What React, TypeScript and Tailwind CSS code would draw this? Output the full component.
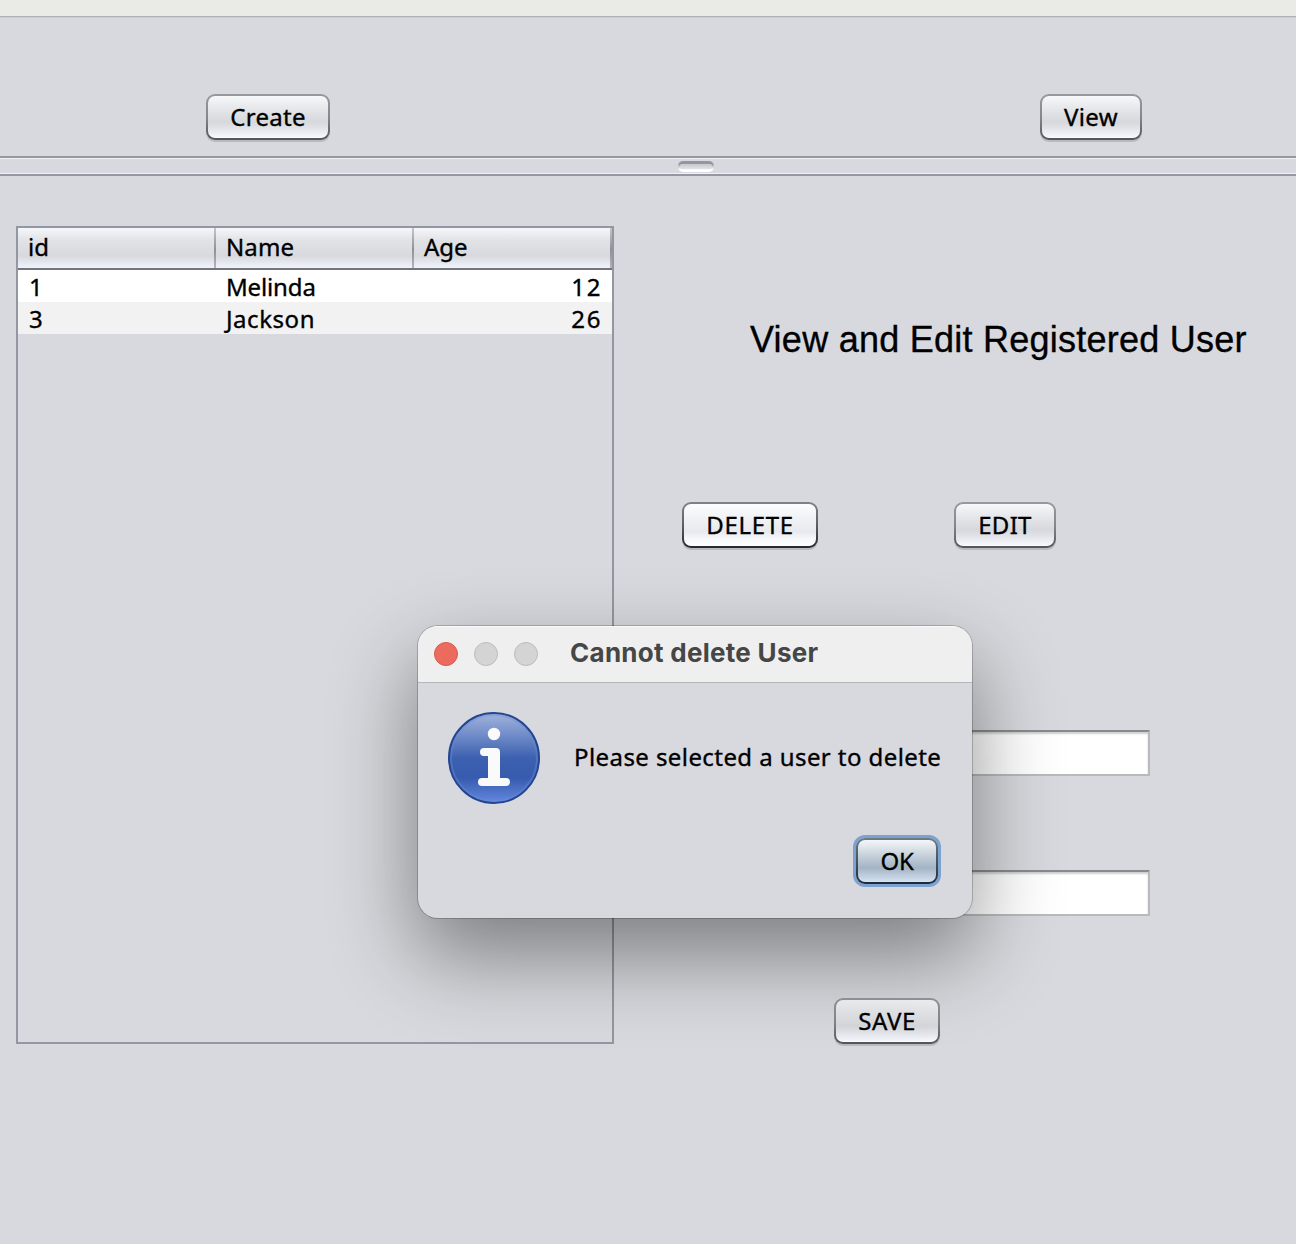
import React from "react";

const face = {
  normal: "bg-[linear-gradient(180deg,#f7f8fa_0%,#e6e7ea_30%,#d7d8dc_62%,#e4e6ec_80%,#f7faff_100%)]",
  hover: "bg-[linear-gradient(180deg,#fdfdfe_0%,#f2f3f6_30%,#e7e9ee_66%,#f6f7fa_82%,#ffffff_100%)]",
  primary: "bg-[linear-gradient(180deg,#f4f7f9_0%,#cfd8e1_30%,#a3b4c4_66%,#bdcbda_84%,#d3e4f7_100%)]",
};

const edge = {
  normal: "bg-[linear-gradient(180deg,#949a9f_0%,#85888d_50%,#53545b_100%)] shadow-[0_2px_0_#b9babf]",
  hover: "bg-[linear-gradient(180deg,#7f8288_0%,#5c5f67_50%,#26272e_100%)] shadow-[0_2px_0_#b9babf]",
  primary: "bg-[linear-gradient(180deg,#6c7b88_0%,#465462_50%,#1c2a3a_100%)] shadow-[0_0_0_3px_#7ea2cf]",
};

function Button({
  children,
  className,
  kind = "normal",
}: {
  children: React.ReactNode;
  className: string;
  kind?: "normal" | "hover" | "primary";
}) {
  return (
    <button className={`h-[46px] shrink-0 rounded-[9px] p-[2px] ${edge[kind]} ${className}`}>
      <span className={`flex h-full items-center justify-center rounded-[7px] pb-px whitespace-nowrap ${face[kind]}`}>
        {children}
      </span>
    </button>
  );
}

function Field() {
  return (
    <input
      className="block h-[46px] w-[350px] border-2 border-[#b9babb] border-t-[#888b8d] bg-white shadow-[inset_0_2px_2px_#cfd1d1] outline-none"
      readOnly
    />
  );
}

function InfoIcon() {
  return (
    <svg width="92" height="92" viewBox="0 0 92 92" className="shrink-0">
      <defs>
        <linearGradient id="disc" x1="0" y1="0" x2="0" y2="1">
          <stop offset="0" stopColor="#a3b4dc" />
          <stop offset="0.25" stopColor="#6f8bc8" />
          <stop offset="0.5" stopColor="#3d61b0" />
          <stop offset="0.72" stopColor="#375bae" />
          <stop offset="1" stopColor="#6388df" />
        </linearGradient>
      </defs>
      <circle cx="46" cy="46" r="45" fill="url(#disc)" stroke="#254590" strokeWidth="2" />
      <circle cx="46" cy="46" r="43" fill="none" stroke="#6c8ed8" strokeOpacity="0.4" strokeWidth="2" />
      <g fill="#fafafa">
        <circle cx="46" cy="22" r="6.2" />
        <path d="M36 36H48Q52 36 52 40V66H58A4 4 0 0 1 58 74H34A4 4 0 0 1 34 66H40V44H36A4 4 0 0 1 36 36Z" />
      </g>
    </svg>
  );
}

function HeaderCell({ children }: { children: React.ReactNode }) {
  return (
    <div className="flex w-[198px] items-stretch">
      <div className="flex flex-1 items-center pb-[3px] pl-[10px]">{children}</div>
      <div className="w-[2px] bg-[linear-gradient(180deg,#c3c5ca_0%,#8d9096_55%,#b4b6bc_100%)]" />
    </div>
  );
}

const users = [
  { id: "1", name: "Melinda", age: "12", row: "bg-white", tracking: "tracking-[-0.15px]" },
  { id: "3", name: "Jackson", age: "26", row: "bg-[#f2f2f2]", tracking: "tracking-[0.55px]" },
];

function UserTable() {
  return (
    <div className="h-[818px] w-[598px] shrink-0 border-2 border-[#9297a1]">
      <div className="flex h-[42px] border-b-2 border-[#70757f] bg-[linear-gradient(180deg,#f6f7fa_0%,#e2e3e7_30%,#d8d9de_70%,#e6e9ef_88%,#eff4fb_100%)]">
        <HeaderCell>id</HeaderCell>
        <HeaderCell>
          <span className="tracking-[0.1px]">Name</span>
        </HeaderCell>
        <HeaderCell>Age</HeaderCell>
      </div>
      {users.map((u) => (
        <div key={u.id} className={`flex h-8 items-center pt-[2px] leading-[30px] ${u.row}`}>
          <div className="w-[198px] pl-[11px]">{u.id}</div>
          <div className={`w-[198px] pl-[10px] ${u.tracking}`}>{u.name}</div>
          <div className="w-[198px] pr-[10px] text-right tracking-[1.6px]">{u.age}</div>
        </div>
      ))}
    </div>
  );
}

function Dialog() {
  return (
    <div className="absolute top-[626px] left-[418px] flex h-[292px] w-[554px] flex-col overflow-hidden rounded-[20px] bg-[#d8d9de] shadow-[0_0_0_1px_rgba(0,0,0,0.2),0_36px_84px_2px_rgba(0,0,0,0.42)]">
      <div className="flex h-[57px] shrink-0 items-center border-b border-[#b5b6ba] bg-[#efefef] pl-4 shadow-[inset_0_1px_0_#fbfbfb]">
        <div className="flex gap-4">
          <div className="size-6 rounded-full border border-[#d9584c] bg-[#ec6a5e]" />
          <div className="size-6 rounded-full border border-[#bcbcbc] bg-[#d4d4d4]" />
          <div className="size-6 rounded-full border border-[#bcbcbc] bg-[#d4d4d4]" />
        </div>
        <div className="ml-8 pb-[2px] font-['Inter'] text-[26px] font-bold tracking-[0.28px] whitespace-nowrap text-[#464646] [-webkit-text-stroke:0px]">
          Cannot delete User
        </div>
      </div>
      <div className="flex items-center pt-[29px] pl-[30px]">
        <InfoIcon />
        <div className="ml-[34px] pb-[3px] tracking-[0.42px] whitespace-nowrap">Please selected a user to delete</div>
      </div>
      <div className="flex justify-end pt-[34px] pr-[34px]">
        <Button className="w-[82px]" kind="primary">
          <span className="tracking-[-0.3px]">OK</span>
        </Button>
      </div>
    </div>
  );
}

export default function App() {
  return (
    <div className="relative h-[1244px] w-[1296px] overflow-hidden bg-[#d8d9de] font-['Noto_Sans',sans-serif] text-[24px] leading-[32px] text-black [-webkit-text-stroke:0.35px]">
      <div className="h-[17px] border-b border-[#aeb0b6] bg-[#eaeae7]" />
      <div className="flex h-[139px] border-t border-[#cccdd2] pt-[76px] pl-[206px]">
        <Button className="w-[124px]">
          <span className="tracking-[0.3px]">Create</span>
        </Button>
        <Button className="ml-[710px] w-[102px]">
          <span className="tracking-[0.4px]">View</span>
        </Button>
      </div>
      <div className="flex h-5 items-center justify-center border-y-2 border-[#9297a1] pt-px pl-24 shadow-[inset_0_1px_0_#f0f1f5,inset_0_-1px_0_#f0f1f5]">
        <div className="h-[11px] w-9 rounded-[5px] bg-[linear-gradient(180deg,#9297a1_0%,#9297a1_25%,#ffffff_80%)] px-[2px] pt-[3px] pb-[3px]">
          <div className="h-full rounded-[2px] bg-[linear-gradient(180deg,#c8c9cf,#e0e1e7)]" />
        </div>
      </div>
      <div className="flex pt-[50px] pl-4">
        <UserTable />
        <div className="flex flex-1 flex-col">
          <h1 className="mt-[94px] ml-[136px] font-['Liberation_Sans'] text-[36px] leading-[40px] tracking-[0.25px] whitespace-nowrap">
            View and Edit Registered User
          </h1>
          <div className="mt-[142px] ml-[68px] flex">
            <Button className="w-[136px]" kind="hover">
              <span className="tracking-[0.7px]">DELETE</span>
            </Button>
            <Button className="ml-[136px] w-[102px]">
              <span className="tracking-[0.3px]">EDIT</span>
            </Button>
          </div>
          <div className="mt-[182px] ml-[186px] flex flex-col gap-[94px]">
            <Field />
            <Field />
          </div>
          <div className="mt-[82px] ml-[220px]">
            <Button className="w-[106px]">
              <span className="tracking-[0.6px]">SAVE</span>
            </Button>
          </div>
        </div>
      </div>
      <Dialog />
    </div>
  );
}
